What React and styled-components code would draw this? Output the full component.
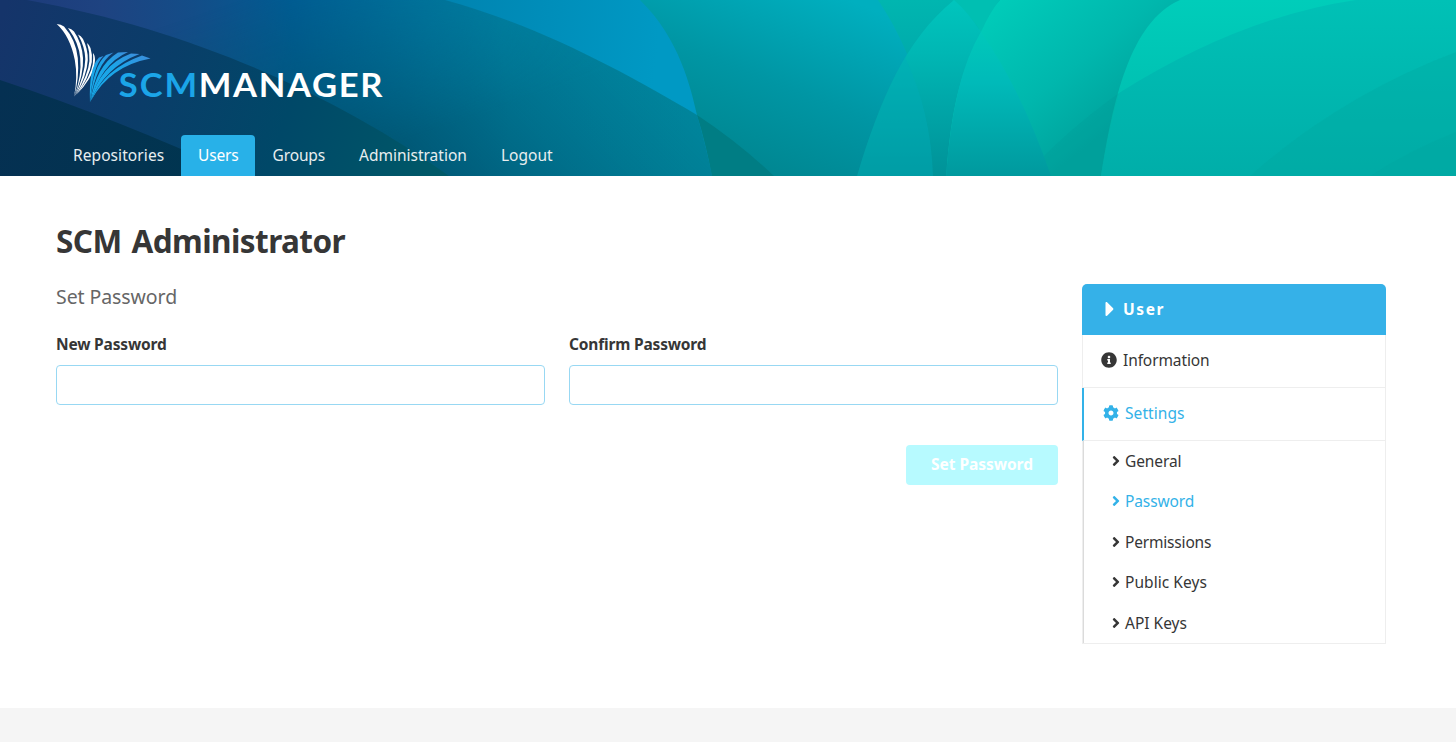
import React from "react";
import styled, { createGlobalStyle } from "styled-components";
import { FaAngleRight, FaCaretRight, FaCog, FaInfoCircle } from "react-icons/fa";

const GlobalStyle = createGlobalStyle`
  *, *::before, *::after { box-sizing: border-box; }
  html { background: #fff; }
  body {
    margin: 0;
    overflow: hidden;
    color: #363636;
    font-family: "Noto Sans", sans-serif;
    font-size: 15.5px;
    line-height: 24px;
  }
  h1, h2 { margin: 0; }
  svg { flex: none; }
`;

const Page = styled.div`
  display: flex;
  flex-direction: column;
  height: 742px;
`;

const Header = styled.header`
  position: relative;
  height: 176px;
  flex: none;
  background: #00b3aa;
`;

const Backdrop = styled.svg`
  position: absolute;
  inset: 0;
  width: 100%;
  height: 100%;
`;

const HeaderContent = styled.div`
  position: relative;
  display: flex;
  flex-direction: column;
  justify-content: space-between;
  height: 100%;
  padding: 20px 70px 0 56px;
`;

const LogoSvg = styled.svg`
  display: block;
  width: 330px;
  height: 86px;
`;

const Tabs = styled.nav`
  display: flex;
`;

const Tab = styled.a`
  width: ${(p) => p.$width}px;
  height: 41px;
  padding-left: ${(p) => p.$inset || 17}px;
  line-height: 40px;
  white-space: nowrap;
  letter-spacing: ${(p) => p.$tracking || 0}px;
  color: ${(p) => (p.$active ? "#fff" : "#e8eef0")};
  background: ${(p) => (p.$active ? "#28b1e8" : "transparent")};
  border-radius: 4px 4px 0 0;
`;

const Main = styled.main`
  flex: 1;
  padding: 45px 70px 0 56px;
`;

const Title = styled.h1`
  font-size: 31.5px;
  line-height: 40px;
  font-weight: 700;
  letter-spacing: -0.56px;
  word-spacing: 2.2px;
`;

const Columns = styled.div`
  display: grid;
  grid-template-columns: 1fr 304px;
  gap: 24px;
  margin-top: 23px;
`;

const Subtitle = styled.h2`
  font-size: 19.5px;
  line-height: 26px;
  font-weight: 400;
  color: #666;
  letter-spacing: -0.08px;
`;

const Fields = styled.div`
  display: grid;
  grid-template-columns: 1fr 1fr;
  gap: 24px;
  margin-top: 22px;
`;

const Field = styled.label`
  display: flex;
  flex-direction: column;
  gap: 9px;
  font-weight: 700;
  letter-spacing: -0.18px;
`;

const Input = styled.input`
  width: 100%;
  height: 40px;
  border: 1px solid #98d8f3;
  border-radius: 4px;
  background: #fff;
  outline: none;
`;

const Actions = styled.div`
  display: flex;
  justify-content: flex-end;
  margin-top: 40px;
`;

const SubmitButton = styled.button`
  width: 152px;
  height: 40px;
  padding: 0 0 2px;
  border: 0;
  border-radius: 4px;
  background: #b7faff;
  color: #fff;
  font: 700 15.5px "Noto Sans", sans-serif;
  letter-spacing: -0.05px;
`;

const Menu = styled.aside`
  display: flex;
  flex-direction: column;
`;

const MenuLabel = styled.div`
  display: flex;
  align-items: center;
  gap: 8px;
  height: 51px;
  padding: 0 0 1px 23px;
  border-radius: 5px 5px 0 0;
  background: #35b1e8;
  color: #fff;
  font-weight: 700;
  letter-spacing: 1.6px;

  svg { width: 10px; height: 24px; }
`;

const MenuItem = styled.a`
  display: flex;
  align-items: center;
  gap: 6px;
  height: 53px;
  padding: 0 0 2px ${(p) => (p.$active ? 19 : 18)}px;
  border: solid #eee;
  border-width: 0 1px 1px;
  border-left: ${(p) => (p.$active ? "2px solid #33b2e8" : "1px solid #eee")};
  color: ${(p) => (p.$active ? "#33b2e8" : "#363636")};
  letter-spacing: ${(p) => p.$tracking || 0}px;
`;

const SubMenu = styled.div`
  display: flex;
  flex-direction: column;
  height: 203px;
  border: solid #eee;
  border-width: 0 1px 1px;
  box-shadow: inset 1px 0 #dbdbdb;
`;

const SubItem = styled.a`
  display: flex;
  flex: 1;
  align-items: center;
  gap: 4px;
  padding: 0 0 0.4px 28px;
  color: ${(p) => (p.$active ? "#33b2e8" : "#363636")};
  letter-spacing: ${(p) => p.$tracking || 0}px;

  svg { width: 10px; height: 16px; }
`;

const Footer = styled.footer`
  height: 34px;
  flex: none;
  background: #f5f5f5;
`;

function HeaderBackdrop() {
  return (
    <Backdrop viewBox="0 0 1456 176" preserveAspectRatio="none" aria-hidden="true">
      <defs>
        <linearGradient id="sky" gradientUnits="userSpaceOnUse" x1="440" y1="0" x2="660" y2="20">
          <stop offset="0" stopColor="#0083b0" />
          <stop offset="1" stopColor="#0099c4" />
        </linearGradient>
        <linearGradient id="slope" gradientUnits="userSpaceOnUse" x1="40" y1="30" x2="680" y2="-10">
          <stop offset="0" stopColor="#1d3d7c" />
          <stop offset=".1" stopColor="#1e4381" />
          <stop offset=".24" stopColor="#134d88" />
          <stop offset=".4" stopColor="#005d94" />
          <stop offset=".6" stopColor="#00759f" />
          <stop offset=".72" stopColor="#0080a2" />
          <stop offset="1" stopColor="#00859c" />
        </linearGradient>
        <linearGradient id="slopeShade" gradientUnits="userSpaceOnUse" x1="600" y1="20" x2="430" y2="190">
          <stop offset="0" stopColor="#006478" stopOpacity="0" />
          <stop offset="1" stopColor="#005470" stopOpacity=".9" />
        </linearGradient>
        <linearGradient id="slopeFade" gradientUnits="userSpaceOnUse" x1="240" y1="0" x2="300" y2="176">
          <stop offset="0" stopColor="#000" />
          <stop offset="1" stopColor="#fff" />
        </linearGradient>
        <mask id="slopeMask">
          <rect width="1456" height="176" fill="url(#slopeFade)" />
        </mask>
        <linearGradient id="deep" gradientUnits="userSpaceOnUse" x1="0" y1="20" x2="440" y2="170">
          <stop offset="0" stopColor="#15346a" />
          <stop offset=".35" stopColor="#0a3d69" />
          <stop offset=".65" stopColor="#004868" />
          <stop offset="1" stopColor="#005968" />
        </linearGradient>
        <linearGradient id="night" gradientUnits="userSpaceOnUse" x1="0" y1="90" x2="230" y2="170">
          <stop offset="0" stopColor="#053052" />
          <stop offset="1" stopColor="#003650" />
        </linearGradient>
        <linearGradient id="cyan" gradientUnits="userSpaceOnUse" x1="850" y1="0" x2="780" y2="176">
          <stop offset="0" stopColor="#00afbf" />
          <stop offset=".55" stopColor="#0096a4" />
          <stop offset="1" stopColor="#008792" />
        </linearGradient>
        <linearGradient id="teal" x1="0" y1="0" x2="0" y2="1">
          <stop offset="0" stopColor="#00b6b0" />
          <stop offset=".5" stopColor="#00a5a9" />
          <stop offset="1" stopColor="#008f97" />
        </linearGradient>
        <linearGradient id="lens" x1="0" y1="0" x2="0" y2="1">
          <stop offset="0" stopColor="#00c5bd" />
          <stop offset=".3" stopColor="#00b7b4" />
          <stop offset=".6" stopColor="#00a6a8" />
          <stop offset="1" stopColor="#009298" />
        </linearGradient>
        <linearGradient id="lensInner" x1="0" y1="0" x2="0" y2="1">
          <stop offset="0" stopColor="#00c8ba" />
          <stop offset=".35" stopColor="#00bab9" />
          <stop offset="1" stopColor="#00999e" />
        </linearGradient>
        <linearGradient id="mint" gradientUnits="userSpaceOnUse" x1="1000" y1="0" x2="1110" y2="140">
          <stop offset="0" stopColor="#00ccb9" />
          <stop offset=".3" stopColor="#00c0b3" />
          <stop offset=".55" stopColor="#00b7ad" />
          <stop offset=".95" stopColor="#00a39d" />
        </linearGradient>
        <linearGradient id="mintRight" x1="0" y1="0" x2="0" y2="1">
          <stop offset="0" stopColor="#00cdba" />
          <stop offset="1" stopColor="#00b7ac" />
        </linearGradient>
        <linearGradient id="wave" x1="0" y1="0" x2="0" y2="1">
          <stop offset="0" stopColor="#00c1b6" />
          <stop offset="1" stopColor="#00aea9" />
        </linearGradient>
      </defs>
      <rect width="1456" height="176" fill="url(#mint)" />
      <path d="M1101 176C1112 105 1129 22 1180 0H1456V176Z" fill="url(#mintRight)" />
      <path d="M1101 176Q1106 142 1119 93Q1240 17 1356 0H1456V176Z" fill="url(#wave)" />
      <path d="M1025 176Q1062 134 1119 93Q1107 137 1101 176Z" fill="#009c98" fillOpacity=".3" />
      <path d="M1250 176Q1340 96 1456 52V176Z" fill="#00a7a0" fillOpacity=".3" />
      <path d="M1370 176Q1410 150 1456 132V176Z" fill="#009f9b" fillOpacity=".18" />
      <path d="M640 0H1000Q955 46 946 176H700Z" fill="url(#teal)" />
      <path d="M952 0H1000Q991 10 981 32Q968 12 952 0Z" fill="#00bfb2" />
      <path d="M640 0H878C905 40 931 100 933 176H700Z" fill="url(#cyan)" />
      <path d="M857 176C880 100 905 40 954 0Q968 12 981 32Q950 90 946 176Z" fill="url(#lens)" />
      <path d="M857 176Q877 107 905 57Q931 112 933 176Z" fill="#00acb8" fillOpacity=".4" />
      <path d="M946 176Q953 78 981 32Q1021 89 1051 176Z" fill="url(#lensInner)" />
      <path d="M0 0H640C680 39 691 89 697 115C704 139 709 160 712 176H0Z" fill="url(#sky)" />
      <path d="M0 0H445C540 26 626 73 697 115C704 139 709 160 712 176H0Z" fill="url(#slope)" />
      <path d="M0 0H445C540 26 626 73 697 115C704 139 709 160 712 176H0Z" fill="url(#slopeShade)" mask="url(#slopeMask)" />
      <path d="M697 115Q738 142 774 176H712Q706 143 697 115Z" fill="#007d84" />
      <path d="M0 0H27C198 31 341 99 449 176H0Z" fill="url(#deep)" />
      <path d="M0 80Q115 118 242 176H0Z" fill="url(#night)" />
    </Backdrop>
  );
}

function Logo() {
  return (
    <LogoSvg viewBox="56 20 330 86" role="img" aria-label="SCM Manager">
      <defs>
        <linearGradient id="feather" x1="0" y1="1" x2="1" y2="0">
          <stop offset="0" stopColor="#18a9e8" />
          <stop offset=".6" stopColor="#1ba5e8" />
          <stop offset="1" stopColor="#3d8ddc" />
        </linearGradient>
      </defs>
      <g fill="#fff">
        <path d="M56.7 24Q61 24 64 26.5Q76 40 77.8 58Q79.5 78 74 97Q78 77 74.8 60Q70 36 56.7 24Z" />
        <path d="M68 28Q71.5 28.5 74 31.5Q82 43 83 58Q84 74 74.3 97Q82 75 80.2 58Q79 43 68 28Z" />
        <path d="M78 34.5Q81 35.5 83 39Q88 49 87.8 60Q87 76 75 96Q85 74 85.3 59Q85 47 78 34.5Z" />
        <path d="M87 43Q89.5 45 90.5 48Q92.5 54 91.8 62Q89 79 76 95Q88.5 74 89.4 61Q90 52 87 43Z" />
        <path d="M93 53Q95 55 95 60Q94.5 70 89 79Q84 87 77 94Q91 76 92.8 64Q93.5 58 93 53Z" />
      </g>
      <g fill="url(#feather)">
        <path d="M90 102.5Q88.500 68 99 57.500L103.500 56Q92.500 66 90 102.5Z" />
        <path d="M90 102.5Q93 66 106 55L113.500 52.500Q96 64 90 102.5Z" />
        <path d="M90.3 102Q96 66 118 52.500L128 52Q101 64 90.3 102Z" />
        <path d="M90.500 101.5Q100 65 131 53.500L139.500 54Q105 67 90.500 101.5Z" />
        <path d="M91 100.5Q104 69 142 55.500L150.500 58.500Q110 66 91 100.5Z" />
      </g>
      <g fontFamily="Lato, sans-serif" fontWeight="700" fontSize="32">
        <text transform="translate(118.8 96.6) scale(1.08 1)" fill="#1ba5e8" textLength="72.5" lengthAdjust="spacing">SCM</text>
        <text transform="translate(198.8 96.6) scale(1.08 1)" fill="#fff" textLength="170" lengthAdjust="spacing">MANAGER</text>
      </g>
    </LogoSvg>
  );
}

const tabs = [
  { label: "Repositories", width: 125, tracking: 0.08 },
  { label: "Users", width: 74, active: true, tracking: -0.15 },
  { label: "Groups", width: 87, inset: 17.6, tracking: -0.15 },
  { label: "Administration", width: 142 },
  { label: "Logout", width: 86 },
];

const settings = [
  { label: "General", tracking: -0.1 },
  { label: "Password", tracking: -0.12, active: true },
  { label: "Permissions", tracking: -0.18 },
  { label: "Public Keys", tracking: 0.05 },
  { label: "API Keys" },
];

export default function App() {
  return (
    <Page>
      <GlobalStyle />
      <Header>
        <HeaderBackdrop />
        <HeaderContent>
          <Logo />
          <Tabs>
            {tabs.map((t) => (
              <Tab key={t.label} $width={t.width} $inset={t.inset} $active={t.active} $tracking={t.tracking}>
                {t.label}
              </Tab>
            ))}
          </Tabs>
        </HeaderContent>
      </Header>
      <Main>
        <Title>SCM Administrator</Title>
        <Columns>
          <section>
            <Subtitle>Set Password</Subtitle>
            <Fields>
              <Field>
                New Password
                <Input type="password" />
              </Field>
              <Field>
                Confirm Password
                <Input type="password" />
              </Field>
            </Fields>
            <Actions>
              <SubmitButton disabled>Set Password</SubmitButton>
            </Actions>
          </section>
          <Menu>
            <MenuLabel>
              <FaCaretRight />
              User
            </MenuLabel>
            <MenuItem $tracking={-0.1}>
              <FaInfoCircle size={16} />
              Information
            </MenuItem>
            <MenuItem $active $tracking={0.08}>
              <FaCog size={16} />
              Settings
            </MenuItem>
            <SubMenu>
              {settings.map((s) => (
                <SubItem key={s.label} $active={s.active} $tracking={s.tracking}>
                  <FaAngleRight />
                  {s.label}
                </SubItem>
              ))}
            </SubMenu>
          </Menu>
        </Columns>
      </Main>
      <Footer />
    </Page>
  );
}
